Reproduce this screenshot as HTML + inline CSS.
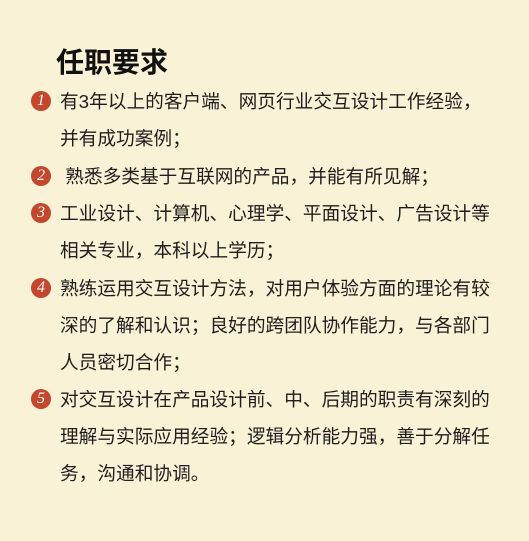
<!DOCTYPE html>
<html><head><meta charset="utf-8"><style>
body{margin:0;width:529px;height:541px;background:#faf2d6;overflow:hidden;font-family:"Liberation Sans","Noto Sans CJK SC",sans-serif;color:#1e1e1e;position:relative}
h1{position:absolute;left:56px;top:44px;margin:0;font-size:28px;font-weight:bold;line-height:38px;color:#111}
.l{position:absolute;left:60px;font-size:18.7px;line-height:24px;white-space:nowrap}
.c{position:absolute;left:31px;width:20px;height:20px;border-radius:50%;background:#c4462c;color:#fff;font-family:"Liberation Serif",serif;font-style:italic;font-size:16px;line-height:20px;text-align:center}
</style></head><body>
<h1>任职要求</h1>
<div class="c" style="top:91px">1</div>
<div class="l" style="top:90px">有3年以上的客户端、网页行业交互设计工作经验，</div>
<div class="l" style="top:127px">并有成功案例；</div>
<div class="c" style="top:166px">2</div>
<div class="l" style="top:165px">&nbsp;熟悉多类基于互联网的产品，并能有所见解；</div>
<div class="c" style="top:203px">3</div>
<div class="l" style="top:202px">工业设计、计算机、心理学、平面设计、广告设计等</div>
<div class="l" style="top:239px">相关专业，本科以上学历；</div>
<div class="c" style="top:278px">4</div>
<div class="l" style="top:277px">熟练运用交互设计方法，对用户体验方面的理论有较</div>
<div class="l" style="top:314px">深的了解和认识；良好的跨团队协作能力，与各部门</div>
<div class="l" style="top:351px">人员密切合作；</div>
<div class="c" style="top:389px">5</div>
<div class="l" style="top:388px">对交互设计在产品设计前、中、后期的职责有深刻的</div>
<div class="l" style="top:425px">理解与实际应用经验；逻辑分析能力强，善于分解任</div>
<div class="l" style="top:462px">务，沟通和协调。</div>
</body></html>
